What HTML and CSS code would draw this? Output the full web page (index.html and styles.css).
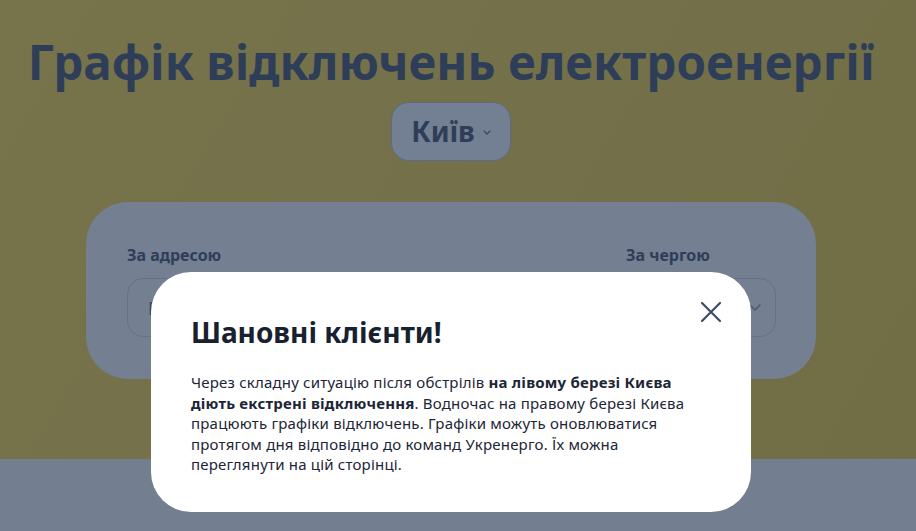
FILE: index.html
```html
<!DOCTYPE html>
<html lang="uk">
<head>
<meta charset="utf-8">
<link rel="stylesheet" href="styles.css">
</head>
<body>
<div class="page">
  <section class="hero">
    <div class="hero-inner">
      <h1 class="title">Графік відключень електроенергії</h1>
      <div class="city-select">
        <span class="city-name">Київ</span>
        <svg class="city-chevron" width="8" height="5" viewBox="0 0 8 5"><path d="M1 1l3 3 3-3" fill="none" stroke="#3a4760" stroke-width="1.2" stroke-linecap="round" stroke-linejoin="round"/></svg>
      </div>
      <div class="search-card">
        <div class="field field-address">
          <div class="field-label">За адресою</div>
          <div class="field-input">
            <span class="field-ph">П</span>
          </div>
        </div>
        <div class="field field-queue">
          <div class="field-label">За чергою</div>
          <div class="field-input field-input-queue">
            <svg class="queue-chevron" width="12" height="7" viewBox="0 0 12 7"><path d="M1 1l5 5 5-5" fill="none" stroke="#4a5670" stroke-width="1.5" stroke-linecap="round" stroke-linejoin="round"/></svg>
          </div>
        </div>
      </div>
    </div>
  </section>
  <section class="lower"></section>
</div>

<div class="modal">
  <button class="modal-close" aria-label="Закрити">
    <svg width="24" height="24" viewBox="0 0 24 24"><path d="M3 3l18 18M21 3L3 21" fill="none" stroke="#3e4b68" stroke-width="2.2" stroke-linecap="round"/></svg>
  </button>
  <h2 class="modal-title">Шановні клієнти!</h2>
  <p class="modal-text">Через складну ситуацію після обстрілів <b>на лівому березі Києва діють екстрені відключення</b>. Водночас на правому березі Києва працюють графіки відключень. Графіки можуть оновлюватися протягом дня відповідно до команд Укренерго. Їх можна переглянути на цій сторінці.</p>
</div>
</body>
</html>
```

FILE: styles.css
```css
* { box-sizing: border-box; }
html, body { margin: 0; padding: 0; }
body {
  width: 916px;
  height: 531px;
  overflow: hidden;
  font-family: "Noto Sans", "Open Sans", sans-serif;
  background: #737e90;
  position: relative;
}
.page { display: flex; flex-direction: column; }
.hero {
  height: 459px;
  background: linear-gradient(120deg, #77744c 0%, #74714a 50%, #716d45 100%);
}
.hero-inner {
  width: 902px;
  display: flex;
  flex-direction: column;
  align-items: center;
  padding-top: 28px;
}
.title {
  margin: 0;
  font-size: 47.5px;
  line-height: 68px;
  font-weight: 700;
  color: #2e3e58;
  white-space: nowrap;
}
.city-select {
  margin-top: 6px;
  width: 120px;
  height: 59px;
  border-radius: 18px;
  background: #737f93;
  border: 1px solid #5e6a80;
  display: flex;
  align-items: center;
  justify-content: center;
  gap: 8px;
}
.city-name {
  font-size: 28px;
  font-weight: 700;
  color: #2e3e58;
  line-height: 1;
  margin-top: -2px;
}
.city-chevron { margin-top: 2px; }
.search-card {
  margin-top: 41px;
  width: 730px;
  height: 177px;
  border-radius: 42px;
  background: #747f91;
  display: flex;
  justify-content: space-between;
  padding: 42px 40px 0 41px;
}
.field { display: flex; flex-direction: column; gap: 12px; }
.field-label {
  font-size: 16px;
  font-weight: 700;
  color: #2e3e58;
  line-height: 22px;
}
.field-input {
  height: 59px;
  border: 1px solid #66718a;
  border-radius: 16px;
  display: flex;
  align-items: center;
  padding-left: 20px;
}
.field-address .field-input { width: 120px; }
.field-ph { color: #3a4660; font-size: 18px; }
.field-queue { width: 150px; }
.field-input-queue { justify-content: flex-end; padding-right: 14px; }
.lower { flex: 1; height: 72px; background: #737e90; }

.modal {
  position: absolute;
  left: 151px;
  top: 272px;
  width: 600px;
  height: 240px;
  background: #fff;
  border-radius: 40px;
  padding: 40px 40px 0 40px;
}
.modal-close {
  border: 0;
  background: none;
  padding: 0;
  position: absolute;
  top: 28px;
  left: 548px;
  width: 24px;
  height: 24px;
  cursor: pointer;
}
.modal-close svg { display: block; }
.modal-title {
  margin: 0;
  font-size: 28px;
  line-height: 40px;
  font-weight: 700;
  color: #17212f;
}
.modal-text {
  margin: 20px 0 0;
  font-size: 15px;
  letter-spacing: 0.2px;
  line-height: 20.5px;
  color: #1c2636;
}
.modal-text b { font-weight: 700; }
```
